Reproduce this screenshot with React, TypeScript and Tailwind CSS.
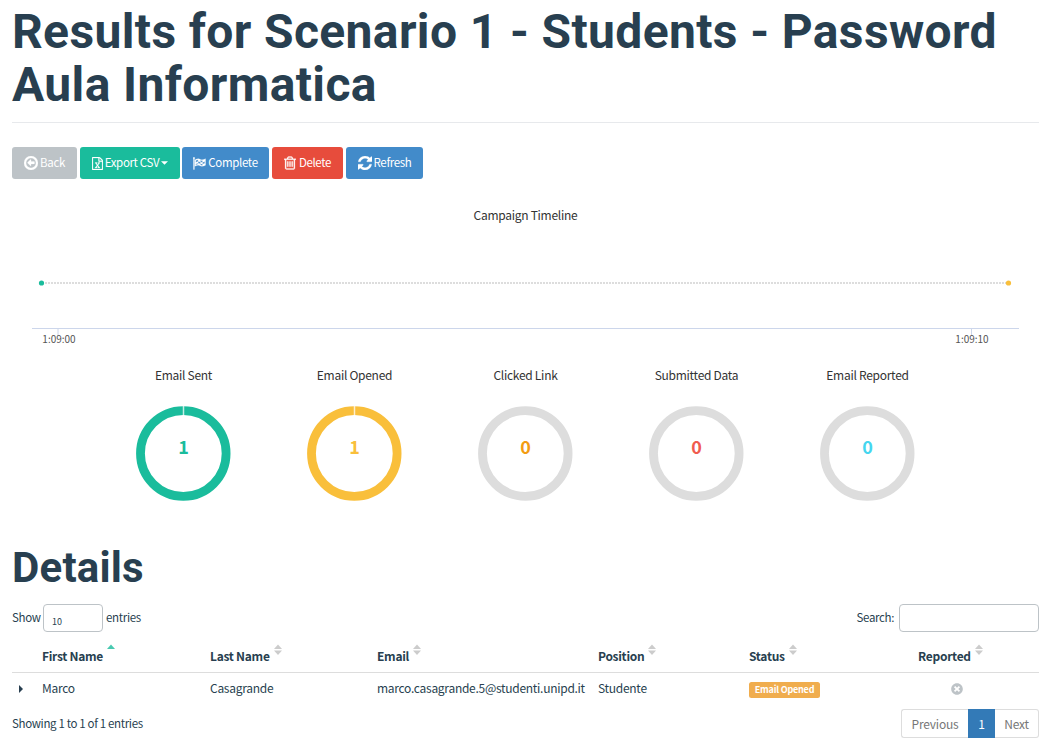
import type { ReactNode } from "react";
import { FaTimesCircle } from "react-icons/fa";

const icons = {
  back: {
    box: "128 128 1536 1536",
    d: "M896 128a768 768 0 1 0 0 1536a768 768 0 1 0 0-1536zM896 352a544 544 0 1 1 0 1088a544 544 0 1 1 0-1088zM1280 832v128q0 14-9 23t-23 9h-352v192q0 21-19.500 29t-35.500-5l-320-320q-9-9-9-23t9-23l320-320q15-14 35-5.500t20 28.500v192h352q14 0 23 9t9 32z",
  },
  csv: {
    box: "128 0 1536 1792",
    d: "M1596 380q28 28 48 76t20 88v1152q0 40-28 68t-68 28h-1344q-40 0-68-28t-28-68v-1600q0-40 28-68t68-28h896q40 0 88 20t76 48zm-444-244v376h376q-10-29-22-41l-313-313q-12-12-41-22zm384 1528v-1024h-416q-40 0-68-28t-28-68v-416h-768v1536h1280zm-979-234v106h281v-106h-75l103-161q5-7 10-16.500t7.500-13.500 3.500-4h2q1 4 5 10 2 4 4.500 7.500t6 8 6.500 8.500l107 161h-76v106h291v-106h-68l-192-273 195-282h67v-107h-279v107h74l-103 159q-4 7-10 16.500t-9 13.500l-2 3h-2q-1-4-5-10-6-11-17-23l-106-159h76v-107h-290v107h68l189 272-194 283h-68z",
  },
  flag: {
    box: "0 0 14 14",
    d: "M0 1.200a1 1 0 0 1 2 0a1 1 0 0 1-.5.850V13.500H.500V2.050A1 1 0 0 1 0 1.200zM2 3.200C4 2 5.600 1.600 7.500 2.500C9.600 3.500 11.200 3 13.500 1.900V8.800C11.400 9.900 9.600 10.300 7.500 9.300C5.600 8.400 4 8.800 2 10zM3 3.900V5.800Q4.300 5.100 5.500 4.900V3Q4.200 3.200 3 3.900zM5.500 4.900V6.700Q6.800 6.700 8 7.300V5.400Q6.800 4.900 5.500 4.900zM8 3.600V5.400Q9.200 5.900 10.300 5.700V3.900Q9.200 4.100 8 3.600zM10.300 5.700V7.500Q11.500 7.200 12.700 6.600V4.900Q11.500 5.500 10.300 5.700zM3 7.500V8.700Q4.200 8.100 5.500 7.900V6.700Q4.300 6.800 3 7.500zM8 7.300V8.700Q9.200 9.200 10.300 9V7.500Q9.200 7.800 8 7.300z",
  },
  trash: {
    box: "192 128 1408 1536",
    d: "M704 736v576q0 14-9 23t-23 9h-64q-14 0-23-9t-9-23v-576q0-14 9-23t23-9h64q14 0 23 9t9 23zm256 0v576q0 14-9 23t-23 9h-64q-14 0-23-9t-9-23v-576q0-14 9-23t23-9h64q14 0 23 9t9 23zm256 0v576q0 14-9 23t-23 9h-64q-14 0-23-9t-9-23v-576q0-14 9-23t23-9h64q14 0 23 9t9 23zm128 724v-948h-896v948q0 22 7 40.500t14.500 27 10.500 8.500h832q3 0 10.500-8.500t14.500-27 7-40.500zm-672-1076h448l-48-117q-7-9-17-11h-317q-10 2-17 11zm928 32v64q0 14-9 23t-23 9h-96v948q0 83-47 143.500t-113 60.500h-832q-66 0-113-58.500t-47-141.500v-952h-96q-14 0-23-9t-9-23v-64q0-14 9-23t23-9h309l70-167q15-37 54-63t79-26h320q40 0 79 26t54 63l70 167h309q14 0 23 9t9 23z",
  },
  refresh: {
    box: "0 128 1536 1536",
    d: "M1511 1056q0 5-1 7-64 268-268 434.500t-478 166.500q-146 0-282.500-55t-243.500-157l-129 129q-19 19-45 19t-45-19-19-45v-448q0-26 19-45t45-19h448q26 0 45 19t19 45-19 45l-137 137q71 66 161 102t187 36q134 0 250-65t186-179q11-17 53-117 8-23 30-23h192q13 0 22.500 9.500t9.500 22.500zm25-800v448q0 26-19 45t-45 19h-448q-26 0-45-19t-19-45 19-45l138-138q-148-137-349-137-134 0-250 65t-186 179q-11 17-53 117-8 23-30 23h-199q-13 0-22.500-9.500t-9.500-22.500v-7q65-268 270-434.500t480-166.500q146 0 284 55.500t245 156.500l130-129q19-19 45-19t45 19 19 45z",
  },
};

function Icon({ name, className }: { name: keyof typeof icons; className: string }) {
  return (
    <svg
      viewBox={icons[name].box}
      className={`shrink-0 ${className}`}
      fill="currentColor"
      stroke="currentColor"
      strokeWidth=".25"
      fillRule="evenodd"
    >
      <path d={icons[name].d} vectorEffect="non-scaling-stroke" />
    </svg>
  );
}

function Button({ className, children }: { className: string; children: ReactNode }) {
  return (
    <button className={`flex h-8 items-center justify-center rounded-[3px] text-[11.500px] tracking-[-0.350px] text-white ${className}`}>
      {children}
    </button>
  );
}

const stats = [
  { label: "Email Sent", value: 1, text: "text-[#1abc9c]", ring: "#1abc9c" },
  { label: "Email Opened", value: 1, text: "text-[#f9bf3b]", ring: "#f9bf3b" },
  { label: "Clicked Link", value: 0, text: "text-[#f39c12]", ring: "#dddddd" },
  { label: "Submitted Data", value: 0, text: "text-[#f05b4f]", ring: "#dddddd" },
  { label: "Email Reported", value: 0, text: "text-[#45d6ef]", ring: "#dddddd" },
];

function Stat({ label, value, text, ring }: (typeof stats)[number]) {
  return (
    <div className="flex w-[171px] flex-col items-center">
      <div className="h-5 leading-5 text-[#333333]">{label}</div>
      <div className="relative mt-[20px] h-[96px] w-[96px]">
        <svg viewBox="0 0 96 96" className="h-full w-full">
          <circle cx="47.300" cy="48.500" r="42.800" fill="none" stroke={ring} strokeWidth="8.800" />
          {value > 0 && <path d="M47.500 0V11" stroke="#fff" strokeOpacity=".75" strokeWidth="1.500" />}
        </svg>
        <div className={`absolute inset-x-0 top-[29px] text-center text-[18px] leading-6 font-bold ${text}`}>{value}</div>
      </div>
    </div>
  );
}

function Heading({ label, active, className }: { label: string; active?: boolean; className: string }) {
  return (
    <div className={`flex ${className}`}>
      <span>{label}</span>
      <svg viewBox="0 0 8 12" className="mt-[1px] ml-[4px] h-3 w-2">
        <path d="M0 5L4 .500L8 5z" fill={active ? "#48c9b0" : "#cccccc"} />
        {!active && <path d="M0 6.500L4 11L8 6.500z" fill="#cccccc" />}
      </svg>
    </div>
  );
}

export default function App() {
  return (
    <main className="h-[742px] w-[1047px] overflow-hidden bg-white px-3 font-['Noto_Sans_CJK_SC',sans-serif] text-[12px] tracking-[-0.280px] text-[#283f50]">
      <h1 className="h-[123px] w-[1027px] border-b border-[#e7e9ec] pt-[6px] font-['Roboto',sans-serif] text-[48px] leading-[52.800px] font-bold tracking-[0.370px]">
        Results for Scenario 1 - Students - Password Aula Informatica
      </h1>
      <div className="mt-6 flex">
        <Button className="w-[65px] gap-[2px] bg-[#bdc3c7]"><Icon name="back" className="h-[14px] w-[14px]" />Back</Button>
        <Button className="ml-[3px] w-[100px] gap-[2px] bg-[#1abc9c]">
          <Icon name="csv" className="h-[13px] w-[11px]" />Export CSV
          <svg viewBox="0 0 8 4" className="h-1 w-[7px]" fill="currentColor"><path d="M0 0H8L4 4z" /></svg>
        </Button>
        <Button className="ml-[2px] w-[87px] gap-[2px] bg-[#428bca]"><Icon name="flag" className="h-[13px] w-[13px]" />Complete</Button>
        <Button className="ml-[3px] w-[71px] gap-[3px] bg-[#e74c3c]"><Icon name="trash" className="h-[14px] w-[12px]" />Delete</Button>
        <Button className="ml-[3px] w-[77px] gap-[2px] bg-[#428bca]"><Icon name="refresh" className="h-[14px] w-[14px]" />Refresh</Button>
      </div>
      <section className="mt-[26px] h-[160px] w-[1027px]">
        <div className="h-5 text-center leading-5 text-[#333333]">Campaign Timeline</div>
        <svg viewBox="0 0 1027 104" className="mt-[21px] h-[104px] w-[1027px]">
          <path d="M33 37H994" stroke="#dddddd" strokeWidth="2" strokeDasharray="2 1" />
          <circle cx="29.500" cy="37" r="2.600" fill="#1abc9c" />
          <circle cx="996.500" cy="37" r="2.600" fill="#f9bf3b" />
          <path d="M20 82.500H1007M46 82V90M959.500 82V90" fill="none" stroke="#ccd6eb" />
          <g fill="#555555" fontSize="10" textAnchor="middle" letterSpacing="0">
            <text x="47" y="97">1:09:00</text>
            <text x="960" y="97">1:09:10</text>
          </g>
        </svg>
      </section>
      <section className="flex h-[180px] w-[1027px] justify-center">
        {stats.map((s) => <Stat key={s.label} {...s} />)}
      </section>
      <h2 className="h-[59px] font-['Roboto',sans-serif] text-[42px] leading-[46px] font-bold tracking-[0.200px]">Details</h2>
      <div className="flex h-7 w-[1027px] items-center justify-between text-[11.500px] leading-7 tracking-[-0.350px]">
        <div className="flex items-center">
          <span className="-mt-0.5">Show</span>
          <div className="mr-[3px] ml-[2.500px] h-7 w-[60px] rounded-[4px] border border-[#bdc3c7] pt-[9px] pl-[8px] text-[9px] leading-4 tracking-normal">10</div>
          <span className="-mt-0.5">entries</span>
        </div>
        <div className="flex items-center">
          <span className="-mt-0.5">Search:</span>
          <input className="ml-[5px] h-7 w-[140px] rounded-[4px] border border-[#bdc3c7]" />
        </div>
      </div>
      <div className="mt-[11px] flex h-[30px] w-[1027px] border-b border-[#dddddd] pl-[30px] leading-[26px] font-bold">
        <Heading label="First Name" active className="w-[168px]" />
        <Heading label="Last Name" className="w-[167px]" />
        <Heading label="Email" className="w-[221px]" />
        <Heading label="Position" className="w-[151px]" />
        <Heading label="Status" className="w-[169px]" />
        <Heading label="Reported" className="" />
      </div>
      <div className="flex h-[31px] w-[1027px] items-center leading-4">
        <div className="w-[30px] pl-[7px]"><svg viewBox="0 0 4 8" className="h-2 w-1" fill="currentColor"><path d="M0 0L4 4L0 8z" /></svg></div>
        <div className="-mt-0.5 w-[168px]">Marco</div>
        <div className="-mt-0.5 w-[167px]">Casagrande</div>
        <div className="-mt-0.5 w-[221px]">marco.casagrande.5@studenti.unipd.it</div>
        <div className="-mt-0.5 w-[151px]">Studente</div>
        <div className="w-[202px]">
          <div className="mt-[3px] h-4 w-[71px] rounded-[2.500px] bg-[#f0ad4e] text-center text-[9px] leading-4 font-bold tracking-[-0.200px] text-white">Email Opened</div>
        </div>
        <FaTimesCircle className="h-3 w-3 text-[#bdc3c7]" />
      </div>
      <div className="flex w-[1027px] items-start justify-between pt-[5px]">
        <div className="pt-[4px] text-[11.500px] leading-5 tracking-[-0.350px]">Showing 1 to 1 of 1 entries</div>
        <div className="flex h-[29px] items-stretch text-center leading-[28px] tracking-[-0.200px] text-[#777777]">
          <div className="w-[67px] rounded-l-[3px] border border-r-0 border-[#dddddd]">Previous</div>
          <div className="w-[27px] bg-[#337ab7] pt-px text-white">1</div>
          <div className="w-[44px] rounded-r-[3px] border border-l-0 border-[#dddddd]">Next</div>
        </div>
      </div>
    </main>
  );
}
